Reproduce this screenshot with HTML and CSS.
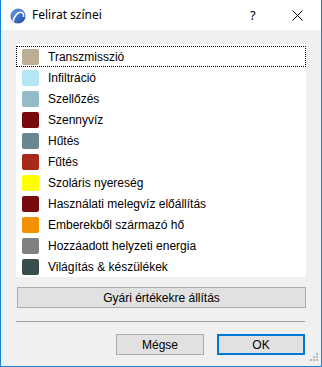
FILE: index.html
```html
<!DOCTYPE html>
<html lang="hu">
<head>
<meta charset="UTF-8" />
<title>Felirat színei</title>
<link rel="stylesheet" href="styles.css">
</head>
<body>
<div class="window">

  <!-- title bar -->
  <div class="titlebar">
    <svg class="appicon" width="16" height="16" viewBox="0 0 16 16">
      <defs>
        <linearGradient id="g" x1="0" y1="0" x2="1" y2="1">
          <stop offset="0" stop-color="#6c9fe6"/>
          <stop offset="1" stop-color="#1d46a3"/>
        </linearGradient>
      </defs>
      <circle cx="8" cy="8" r="7.6" fill="url(#g)"/>
      <path d="M3 13.5 C4.5 7 8 4 11 4.2 C13 4.4 13.8 6.5 13.6 9" fill="none" stroke="#fff" stroke-width="1.6"/>
    </svg>
    <span class="title">Felirat színei</span>
    <span class="help">?</span>
    <svg class="close" width="11" height="11" viewBox="0 0 11 11">
      <path d="M0.5 0.5 L10.5 10.5 M10.5 0.5 L0.5 10.5" stroke="#000" stroke-width="1"/>
    </svg>
  </div>

  <!-- content -->
  <div class="content">
    <ul class="list">
      <li class="row focus"><span class="sw" style="background:#bcae94"></span>Transzmisszió</li>
      <li class="row"><span class="sw" style="background:#b4e6f6"></span>Infiltráció</li>
      <li class="row"><span class="sw" style="background:#93bcc8"></span>Szellőzés</li>
      <li class="row"><span class="sw" style="background:#780a0c"></span>Szennyvíz</li>
      <li class="row"><span class="sw" style="background:#688890"></span>Hűtés</li>
      <li class="row"><span class="sw" style="background:#a8281a"></span>Fűtés</li>
      <li class="row"><span class="sw" style="background:#ffff00"></span>Szoláris nyereség</li>
      <li class="row"><span class="sw" style="background:#780a0c"></span>Használati melegvíz előállítás</li>
      <li class="row"><span class="sw" style="background:#f39200"></span>Emberekből származó hő</li>
      <li class="row"><span class="sw" style="background:#808080"></span>Hozzáadott helyzeti energia</li>
      <li class="row"><span class="sw" style="background:#3b4c4c"></span>Világítás &amp; készülékek</li>
    </ul>

    <button class="btn wide">Gyári értékekre állítás</button>

    <div class="sep"></div>

    <div class="actions">
      <button class="btn">Mégse</button>
      <button class="btn default">OK</button>
    </div>
  </div>

  <svg class="grip" width="12" height="12" viewBox="0 0 12 12">
    <rect x="9" y="1" width="2" height="2" fill="#b8b8b8"/>
    <rect x="6" y="4" width="2" height="2" fill="#b8b8b8"/>
    <rect x="9" y="4" width="2" height="2" fill="#b8b8b8"/>
    <rect x="3" y="7" width="2" height="2" fill="#b8b8b8"/>
    <rect x="6" y="7" width="2" height="2" fill="#b8b8b8"/>
    <rect x="9" y="7" width="2" height="2" fill="#b8b8b8"/>
  </svg>
</div>
</body>
</html>
```

FILE: styles.css
```css
/* reset */
*{margin:0;padding:0;box-sizing:border-box}

body{background:#f0f0f0;font-family:"Liberation Sans",Arial,sans-serif;font-size:12px;color:#000}

/* dialog frame */
.window{
  position:relative;width:322px;height:367px;
  background:#f0f0f0;
  border:1px solid #1883d7;border-top:none
}

/* title bar */
.titlebar{
  height:30px;background:#fff;display:flex;align-items:center;
  padding-left:9px
}
.appicon{flex:none;margin-top:1px}
.title{font-family:"Noto Sans",sans-serif;font-size:12px;margin-left:6px;flex:1;padding-bottom:1px}
.help{font-family:"Noto Sans",sans-serif;font-size:13px;width:14px;margin-right:28px}
.close{margin-right:18px}

/* content */
.content{padding:14px 15px 0}

.list{
  list-style:none;background:#fff;height:233px;padding-top:2px
}
.row{
  height:21px;display:flex;align-items:center;
  border:1px solid transparent;padding-left:5px
}
.row.focus{border:1px dotted #000}
.sw{width:17px;height:16px;border-radius:2px;margin-right:9px;flex:none}

/* buttons */
.btn{
  font-family:"Liberation Sans",Arial,sans-serif;font-size:12px;color:#000;
  background:#e1e1e1;border:1px solid #adadad;height:21px
}
.wide{display:block;width:289px;margin:10px 0 0 1px}

.sep{height:1px;background:#a0a0a0;margin:13px 1px 0 0}

.actions{display:flex;justify-content:flex-end;gap:13px;margin-top:12px;padding-right:1px}
.actions .btn{width:88px}
.btn.default{border:2px solid #0078d7}

/* resize grip */
.grip{position:absolute;right:2px;bottom:2px}
```
